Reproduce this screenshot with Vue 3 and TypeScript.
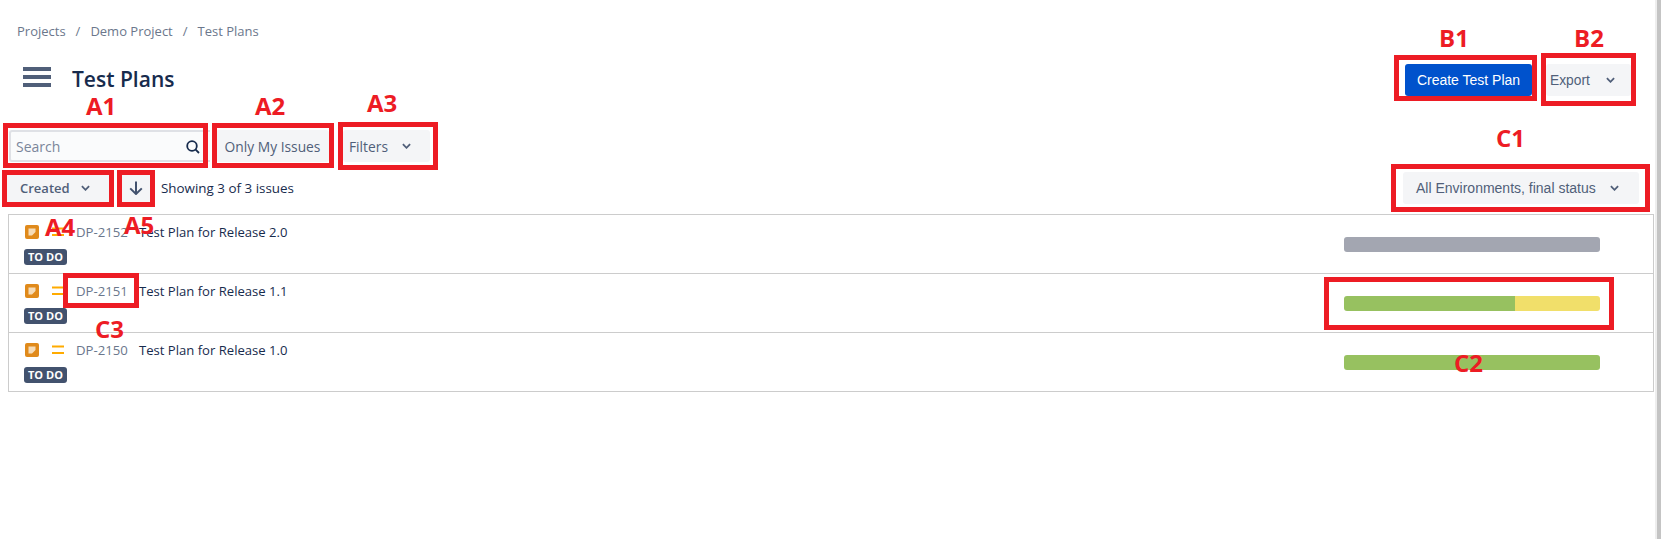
<script setup lang="ts">
interface Plan {
  key: string;
  title: string;
  done: number;
  partial: number;
  none: number;
}

const plans: Plan[] = [
  { key: 'DP-2152', title: 'Test Plan for Release 2.0', done: 0, partial: 0, none: 100 },
  { key: 'DP-2151', title: 'Test Plan for Release 1.1', done: 66.7, partial: 33.3, none: 0 },
  { key: 'DP-2150', title: 'Test Plan for Release 1.0', done: 100, partial: 0, none: 0 }
];

// red review marks drawn on top of the screenshot
const boxes = [
  { left: 3, top: 123, width: 205, height: 45 },
  { left: 212, top: 123, width: 122, height: 45 },
  { left: 338, top: 122, width: 100, height: 48 },
  { left: 2, top: 170, width: 112, height: 37 },
  { left: 117, top: 170, width: 38, height: 37 },
  { left: 1394, top: 55, width: 143, height: 46 },
  { left: 1541, top: 53, width: 95, height: 53 },
  { left: 1391, top: 164, width: 259, height: 48 },
  { left: 1324, top: 277, width: 290, height: 53 },
  { left: 63, top: 273, width: 76, height: 35 }
];

const labels = [
  { text: 'A1', left: 86, top: 91 },
  { text: 'A2', left: 255, top: 91 },
  { text: 'A3', left: 367, top: 88 },
  { text: 'A4', left: 45, top: 212 },
  { text: 'A5', left: 124, top: 210 },
  { text: 'B1', left: 1439, top: 23 },
  { text: 'B2', left: 1574, top: 23 },
  { text: 'C1', left: 1496, top: 123 },
  { text: 'C2', left: 1454, top: 348 },
  { text: 'C3', left: 95, top: 314 }
];
</script>

<template>
  <div class="page">
    <nav class="crumbs">
      <span>Projects</span><i>/</i><span>Demo Project</span><i>/</i><span>Test Plans</span>
    </nav>

    <header class="title-row">
      <div class="title-left">
        <div class="burger"><b></b><b></b><b></b></div>
        <h1>Test Plans</h1>
      </div>
      <div class="title-actions">
        <button class="btn primary">Create Test Plan</button>
        <button class="btn export">
          Export
          <svg class="chev" viewBox="0 0 10 6"><path d="M1 1l4 4 4-4" /></svg>
        </button>
      </div>
    </header>

    <div class="filter-row">
      <div class="search">
        <span>Search</span>
        <svg viewBox="0 0 14 14"><circle cx="6" cy="6" r="4.8" /><path d="M9.4 9.4L13 13" /></svg>
      </div>
      <button class="btn mine">Only My Issues</button>
      <button class="btn filters">
        Filters
        <svg class="chev" viewBox="0 0 10 6"><path d="M1 1l4 4 4-4" /></svg>
      </button>
    </div>

    <div class="sort-row">
      <div class="sort-left">
        <button class="btn created">
          Created
          <svg class="chev" viewBox="0 0 10 6"><path d="M1 1l4 4 4-4" /></svg>
        </button>
        <button class="btn arrow">
          <svg viewBox="0 0 14 14"><path d="M7 0.5v12.5M1.2 7.4L7 13l5.8-5.6" /></svg>
        </button>
        <span class="count">Showing 3 of 3 issues</span>
      </div>
      <button class="btn envs">
        All Environments, final status
        <svg class="chev" viewBox="0 0 10 6"><path d="M1 1l4 4 4-4" /></svg>
      </button>
    </div>

    <div class="list">
      <div v-for="plan in plans" :key="plan.key" class="item">
        <div class="item-main">
          <div class="item-line">
            <svg class="type" viewBox="0 0 14 14">
              <rect width="14" height="14" rx="2" fill="#e08a1b" />
              <path d="M3.5 3.5h7v3.5L7 10.5H3.5z" fill="#f6dcb8" />
            </svg>
            <svg class="prio" viewBox="0 0 12 10"><path d="M0 1.5h12M0 8h12" /></svg>
            <span class="key">{{ plan.key }}</span>
            <span class="name">{{ plan.title }}</span>
          </div>
          <span class="status">TO DO</span>
        </div>
        <div class="bar">
          <span class="done" :style="{ width: plan.done + '%' }"></span>
          <span class="partial" :style="{ width: plan.partial + '%' }"></span>
          <span class="none" :style="{ width: plan.none + '%' }"></span>
        </div>
      </div>
    </div>

    <div class="scroll-edge"></div>

    <span
      v-for="(box, i) in boxes"
      :key="i"
      class="mark"
      :style="{ left: box.left + 'px', top: box.top + 'px', width: box.width + 'px', height: box.height + 'px' }"
    ></span>
    <span
      v-for="label in labels"
      :key="label.text"
      class="mark-label"
      :style="{ left: label.left + 'px', top: label.top + 'px' }"
    >{{ label.text }}</span>
  </div>
</template>

<style>
html,
body {
  margin: 0;
  background: #fff;
  overflow: hidden;
}
</style>

<style scoped>
.page {
  position: relative;
  width: 1661px;
  height: 539px;
  overflow: hidden;
  box-sizing: border-box;
  padding-top: 22px;
  font-family: "Open Sans", "Noto Sans", sans-serif;
  font-size: 13.2px;
  color: #172b4d;
}

.crumbs {
  height: 18px;
  padding-left: 17px;
  display: flex;
  align-items: center;
  color: #6b778c;
  font-size: 13px;
}

.crumbs i {
  font-style: normal;
  margin: 0 10px;
}

.title-row {
  display: flex;
  justify-content: space-between;
  align-items: center;
  height: 32px;
  margin-top: 24px;
}

.title-left {
  display: flex;
  align-items: center;
  padding-left: 23px;
}

.burger {
  width: 28px;
  height: 20px;
  margin-bottom: 6px;
  display: flex;
  flex-direction: column;
  justify-content: space-between;
}

.burger b {
  height: 4px;
  background: #505f79;
}

h1 {
  margin: 0 0 3px 21px;
  font-size: 21px;
  font-weight: 600;
  color: #172b4d;
}

.title-actions {
  display: flex;
  gap: 14px;
  padding-right: 30px;
}

.btn {
  border: none;
  border-radius: 3px;
  background: #f4f5f7;
  color: #505f79;
  font: inherit;
  font-size: 13.8px;
  display: flex;
  align-items: center;
  justify-content: space-between;
  padding: 0;
  box-sizing: border-box;
}

.chev {
  width: 9px;
  height: 6px;
  fill: none;
  stroke: #505f79;
  stroke-width: 2;
}

.primary {
  width: 127px;
  height: 32px;
  background: #0052cc;
  color: #fff;
  justify-content: center;
  font-family: "Liberation Sans", Arial, sans-serif;
  font-size: 14px;
}

.export {
  width: 85px;
  height: 32px;
  padding: 0 16px 0 4px;
  font-family: "Liberation Sans", Arial, sans-serif;
}

.filter-row {
  display: flex;
  align-items: center;
  margin-top: 34px;
  height: 32px;
}

.search {
  width: 201px;
  height: 32px;
  margin-left: 9px;
  box-sizing: border-box;
  border: 2px solid #dfe1e6;
  border-right: none;
  border-radius: 3px 0 0 3px;
  background: #fafbfc;
  display: flex;
  align-items: center;
  justify-content: space-between;
  padding: 1px 10px 0 5px;
  color: #7a869a;
  font-size: 14px;
}

.search svg {
  width: 14px;
  height: 14px;
  fill: none;
  stroke: #172b4d;
  stroke-width: 1.8;
}

.mine {
  width: 113px;
  height: 32px;
  margin-left: 6px;
  justify-content: center;
}

.filters {
  width: 87px;
  height: 32px;
  margin-left: 14px;
  padding: 0 19px 0 6px;
}

.sort-row {
  display: flex;
  justify-content: space-between;
  align-items: center;
  margin-top: 10px;
  height: 32px;
}

.sort-left {
  display: flex;
  align-items: center;
  padding-left: 7px;
}

.created {
  width: 102px;
  height: 32px;
  padding: 0 19px 0 13px;
  font-weight: 600;
  font-size: 13px;
}

.arrow {
  width: 28px;
  height: 32px;
  margin-left: 13px;
  justify-content: center;
}

.arrow svg {
  width: 14px;
  height: 14px;
  fill: none;
  stroke: #42526e;
  stroke-width: 2;
}

.count {
  margin-left: 11px;
  font-size: 13.4px;
  color: #172b4d;
}

.envs {
  width: 236px;
  height: 32px;
  margin-right: 22px;
  padding: 0 20px 0 13px;
  font-family: "Liberation Sans", Arial, sans-serif;
  font-size: 14px;
}

.list {
  margin: 10px 7px 0 8px;
  width: 1646px;
  box-sizing: border-box;
  border: 1px solid #ccc;
}

.item {
  height: 59px;
  box-sizing: border-box;
  display: flex;
  justify-content: space-between;
  align-items: center;
  padding-right: 53px;
}

.item:first-child {
  height: 58px;
}

.item + .item {
  border-top: 1px solid #ccc;
}

.item-main {
  display: flex;
  flex-direction: column;
  align-items: flex-start;
  padding-left: 15px;
  margin-top: -1px;
}

.item-line {
  display: flex;
  align-items: center;
  height: 20px;
}

.type {
  width: 14px;
  height: 14px;
  margin-left: 1px;
}

.prio {
  width: 12px;
  height: 10px;
  margin-left: 13px;
  fill: none;
  stroke: #ffab00;
  stroke-width: 2;
}

.key {
  margin-left: 12px;
  color: #6b778c;
  font-size: 13.2px;
}

.name {
  margin-left: 11px;
  color: #172b4d;
  font-size: 13.1px;
}

.status {
  margin-top: 7px;
  padding: 0 4px;
  height: 16px;
  line-height: 16px;
  border-radius: 3px;
  background: #42526e;
  color: #fff;
  font-size: 11px;
  font-weight: 700;
}

.bar {
  width: 256px;
  height: 15px;
  border-radius: 3px;
  overflow: hidden;
  display: flex;
}

.bar span {
  height: 100%;
}

.done {
  background: #97c160;
}

.partial {
  background: #f1df6a;
}

.none {
  background: #a3a6b1;
}

.scroll-edge {
  position: absolute;
  top: 0;
  right: 0;
  bottom: 0;
  width: 4px;
  background: #c4c4c4;
  border-left: 2px solid #eee;
}

.mark {
  position: absolute;
  box-sizing: border-box;
  border: 5px solid #ed1c24;
}

.mark-label {
  position: absolute;
  color: #ed1c24;
  font-family: "Open Sans", sans-serif;
  font-size: 24px;
  font-weight: 700;
  line-height: 30px;
}
</style>
